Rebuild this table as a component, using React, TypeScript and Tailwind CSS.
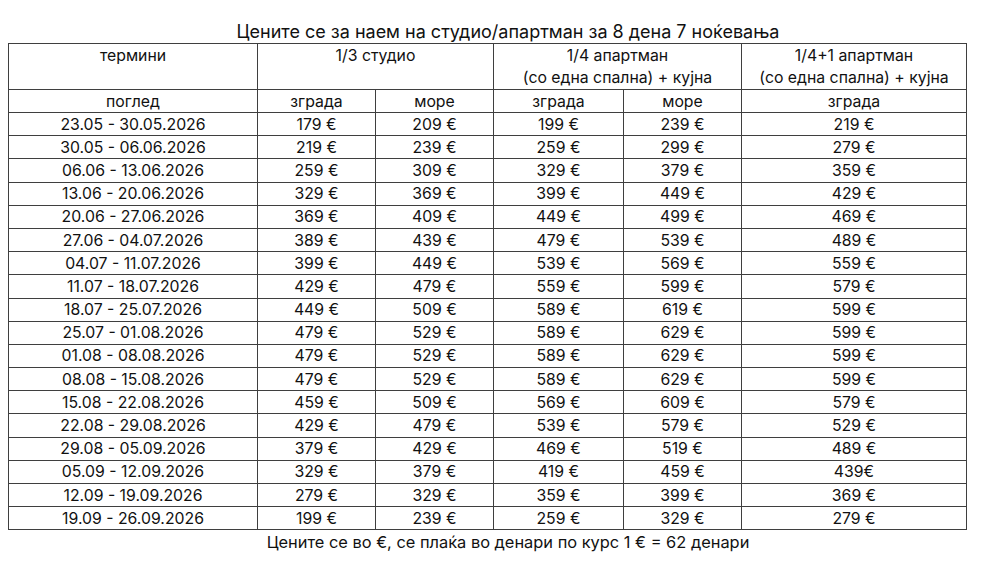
const rows: [string, string, string, string, string, string][] = [
  ["23.05 - 30.05.2026", "179 €", "209 €", "199 €", "239 €", "219 €"],
  ["30.05 - 06.06.2026", "219 €", "239 €", "259 €", "299 €", "279 €"],
  ["06.06 - 13.06.2026", "259 €", "309 €", "329 €", "379 €", "359 €"],
  ["13.06 - 20.06.2026", "329 €", "369 €", "399 €", "449 €", "429 €"],
  ["20.06 - 27.06.2026", "369 €", "409 €", "449 €", "499 €", "469 €"],
  ["27.06 - 04.07.2026", "389 €", "439 €", "479 €", "539 €", "489 €"],
  ["04.07 - 11.07.2026", "399 €", "449 €", "539 €", "569 €", "559 €"],
  ["11.07 - 18.07.2026", "429 €", "479 €", "559 €", "599 €", "579 €"],
  ["18.07 - 25.07.2026", "449 €", "509 €", "589 €", "619 €", "599 €"],
  ["25.07 - 01.08.2026", "479 €", "529 €", "589 €", "629 €", "599 €"],
  ["01.08 - 08.08.2026", "479 €", "529 €", "589 €", "629 €", "599 €"],
  ["08.08 - 15.08.2026", "479 €", "529 €", "589 €", "629 €", "599 €"],
  ["15.08 - 22.08.2026", "459 €", "509 €", "569 €", "609 €", "579 €"],
  ["22.08 - 29.08.2026", "429 €", "479 €", "539 €", "579 €", "529 €"],
  ["29.08 - 05.09.2026", "379 €", "429 €", "469 €", "519 €", "489 €"],
  ["05.09 - 12.09.2026", "329 €", "379 €", "419 €", "459 €", "439€"],
  ["12.09 - 19.09.2026", "279 €", "329 €", "359 €", "399 €", "369 €"],
  ["19.09 - 26.09.2026", "199 €", "239 €", "259 €", "329 €", "279 €"],
];

const cell = "border border-[#3f3f3f] text-center align-middle p-0 leading-[21px]";

export default function App() {
  return (
    <div className="w-[993px] h-[581px] bg-white text-[#111] font-['Inter',_'Noto_Sans',_sans-serif] pt-[21px] pl-[8px]">
      {/* Наслов */}
      <div className="w-[1000px] text-center text-[18px] leading-[22px]">
        Цените се за наем на студио/апартман за 8 дена 7 ноќевања
      </div>

      <table className="table-fixed border-collapse w-[958px] text-[15.8px]">
        <colgroup>
          <col className="w-[249px]" />
          <col className="w-[118px]" />
          <col className="w-[118px]" />
          <col className="w-[130px]" />
          <col className="w-[118px]" />
          <col className="w-[225px]" />
        </colgroup>
        <thead>
          <tr className="h-[46px]">
            <td className={`${cell} align-top pt-[1px]`}>термини</td>
            <td className={`${cell} align-top pt-[1px]`} colSpan={2}>
              1/3 студио
            </td>
            <td className={`${cell} leading-[22px]`} colSpan={2}>
              1/4 апартман
              <br />
              (со една спална) + кујна
            </td>
            <td className={`${cell} leading-[22px]`}>
              1/4+1 апартман
              <br />
              (со една спална) + кујна
            </td>
          </tr>
          <tr className="h-[23px]">
            <td className={cell}>поглед</td>
            <td className={cell}>зграда</td>
            <td className={cell}>море</td>
            <td className={cell}>зграда</td>
            <td className={cell}>море</td>
            <td className={cell}>зграда</td>
          </tr>
        </thead>
        <tbody>
          {rows.map((r) => (
            <tr key={r[0]} className="h-[23.2px]">
              {r.map((v, i) => (
                <td key={i} className={cell}>
                  {v}
                </td>
              ))}
            </tr>
          ))}
        </tbody>
      </table>

      {/* Забелешка */}
      <div className="w-[1000px] text-center text-[16.4px] leading-[24px]">
        Цените се во €, се плаќа во денари по курс 1 € = 62 денари
      </div>
    </div>
  );
}
